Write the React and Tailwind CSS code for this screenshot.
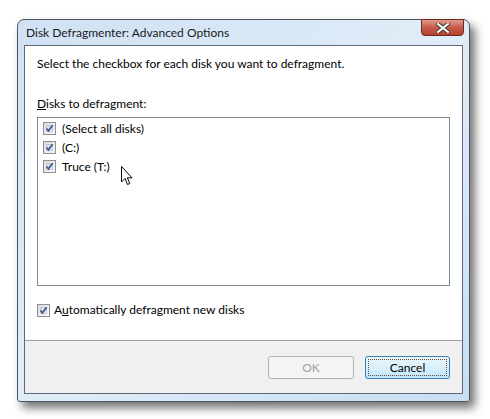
import React from "react";

function Check({ className = "" }) {
  return (
    <span className={`relative inline-block w-[13px] h-[13px] border border-[#8e8f8f] bg-gradient-to-br from-[#dcdcdc] to-[#f8f8f8] shrink-0 ${className}`}>
      <span className="absolute inset-[2px] border border-[#c4c8cd] bg-gradient-to-br from-[#d9dde2] to-[#f4f6f8]" />
      <svg className="absolute left-0 top-0" width="11" height="11" viewBox="0 0 11 11">
        <path d="M2.5 5.5 L4.5 7.8 L8.6 2.2" fill="none" stroke="#3d5a9a" strokeWidth="1.8" />
      </svg>
    </span>
  );
}

function Item({ label }) {
  return (
    <div className="flex items-center h-[19px] pl-[5px] gap-[6px]">
      <Check />
      <span>{label}</span>
    </div>
  );
}

export default function App() {
  return (
    <div className="relative w-[490px] h-[419px] bg-white font-['Lato',sans-serif] text-[12px] text-black overflow-hidden">
      <div className="ml-[17px] mt-[19px] w-[453px] h-[383px] flex flex-col rounded-t-[7px] rounded-b-[3px] border border-[#4c5561] bg-gradient-to-br from-[#cfe1f3] via-[#e0edf8] to-[#c9def2] shadow-[5px_6px_10px_rgba(0,0,0,0.55)]">
        {/* title bar */}
        <div className="relative h-[25px] flex items-center pl-[8px] text-[#1a1a1a]">
          <span className="mt-[1px]">Disk Defragmenter: Advanced Options</span>
          <button className="absolute right-[5px] top-[-1px] w-[43px] h-[17px] rounded-b-[4px] border border-[#6e2a22] bg-gradient-to-b from-[#e09a8e] via-[#c75a48] to-[#b8402d] flex items-center justify-center">
            <svg width="14" height="10" viewBox="0 0 14 10">
              <path d="M2 1 L12 9 M12 1 L2 9" stroke="#3a3a3a" strokeWidth="4" strokeLinecap="square" />
              <path d="M2 1 L12 9 M12 1 L2 9" stroke="#ffffff" strokeWidth="2" strokeLinecap="square" />
            </svg>
          </button>
        </div>
        {/* client */}
        <div className="mx-[6px] mb-[7px] flex-1 flex flex-col border border-[#5e6a78] bg-white">
          <div className="flex-1 flex flex-col pl-[12px] pr-[12px] pt-[10px]">
            <div className="h-[15px] leading-[15px]">Select the checkbox for each disk you want to defragment.</div>
            <div className="mt-[25px] h-[15px] leading-[15px]"><span className="underline">D</span>isks to defragment:</div>
            <div className="mt-[6px] h-[169px] border border-[#828790] pt-[1px]">
              <Item label="(Select all disks)" />
              <Item label="(C:)" />
              <Item label="Truce (T:)" />
            </div>
            <div className="mt-[15px] flex items-center gap-[4px]">
              <Check />
              <span>A<span className="underline">u</span>tomatically defragment new disks</span>
            </div>
          </div>
          <div className="h-[53px] border-t border-[#a0a0a0] bg-[#f0f0f0] flex justify-end items-start pt-[15px] pr-[12px] gap-[11px]">
            <button className="w-[86px] h-[23px] rounded-[3px] border border-[#adb2b5] bg-[#f4f4f4] text-[#a0a0a0]">OK</button>
            <button className="w-[85px] h-[23px] rounded-[3px] border border-[#3c7fb1] bg-gradient-to-b from-[#eaf6fd] via-[#d9f0fc] to-[#bee6fd] p-[2px]">
              <span className="flex h-full w-full items-center justify-center border border-dotted border-[#6b4a3a]">Cancel</span>
            </button>
          </div>
        </div>
      </div>
      {/* mouse cursor */}
      <svg className="absolute left-[121px] top-[166px]" width="13" height="20" viewBox="0 0 13 20">
        <path d="M0.5 0.5 L0.5 16 L4 12.5 L6.5 18.5 L8.8 17.5 L6.3 11.8 L11 11.8 Z" fill="#ffffff" stroke="#000000" strokeWidth="1" strokeLinejoin="round" />
      </svg>
    </div>
  );
}
